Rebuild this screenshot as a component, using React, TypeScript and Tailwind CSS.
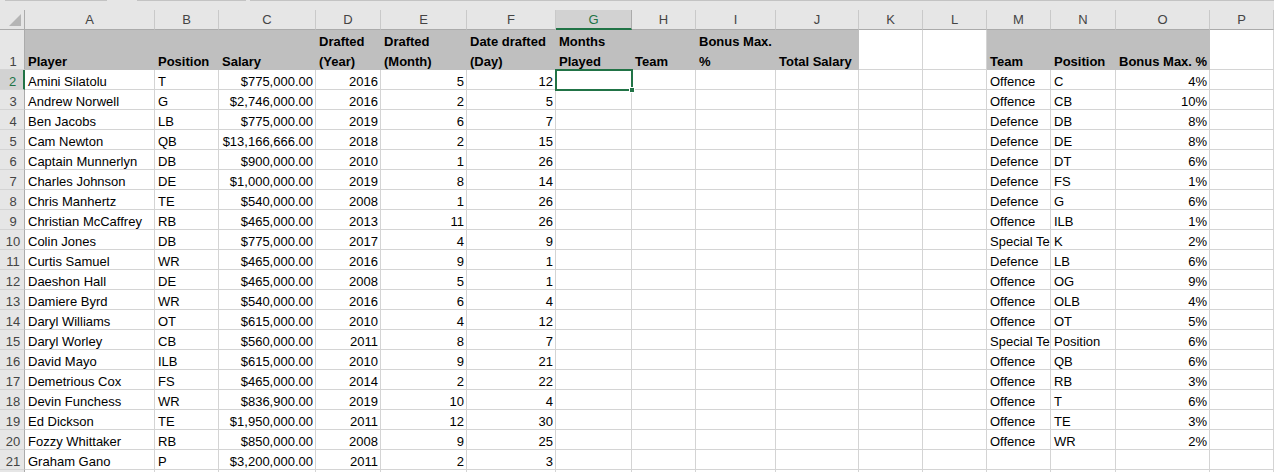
import React from 'react';

type Row = [string, string, string, string, string, string];
type Side = [string, string, string];

const players: Row[] = [
  ['Amini Silatolu', 'T', '$775,000.00', '2016', '5', '12'],
  ['Andrew Norwell', 'G', '$2,746,000.00', '2016', '2', '5'],
  ['Ben Jacobs', 'LB', '$775,000.00', '2019', '6', '7'],
  ['Cam Newton', 'QB', '$13,166,666.00', '2018', '2', '15'],
  ['Captain Munnerlyn', 'DB', '$900,000.00', '2010', '1', '26'],
  ['Charles Johnson', 'DE', '$1,000,000.00', '2019', '8', '14'],
  ['Chris Manhertz', 'TE', '$540,000.00', '2008', '1', '26'],
  ['Christian McCaffrey', 'RB', '$465,000.00', '2013', '11', '26'],
  ['Colin Jones', 'DB', '$775,000.00', '2017', '4', '9'],
  ['Curtis Samuel', 'WR', '$465,000.00', '2016', '9', '1'],
  ['Daeshon Hall', 'DE', '$465,000.00', '2008', '5', '1'],
  ['Damiere Byrd', 'WR', '$540,000.00', '2016', '6', '4'],
  ['Daryl Williams', 'OT', '$615,000.00', '2010', '4', '12'],
  ['Daryl Worley', 'CB', '$560,000.00', '2011', '8', '7'],
  ['David Mayo', 'ILB', '$615,000.00', '2010', '9', '21'],
  ['Demetrious Cox', 'FS', '$465,000.00', '2014', '2', '22'],
  ['Devin Funchess', 'WR', '$836,900.00', '2019', '10', '4'],
  ['Ed Dickson', 'TE', '$1,950,000.00', '2011', '12', '30'],
  ['Fozzy Whittaker', 'RB', '$850,000.00', '2008', '9', '25'],
  ['Graham Gano', 'P', '$3,200,000.00', '2011', '2', '3'],
];

// "Special Te" is what the sheet shows: the text is cut by the next cell
const bonus: Side[] = [
  ['Offence', 'C', '4%'],
  ['Offence', 'CB', '10%'],
  ['Defence', 'DB', '8%'],
  ['Defence', 'DE', '8%'],
  ['Defence', 'DT', '6%'],
  ['Defence', 'FS', '1%'],
  ['Defence', 'G', '6%'],
  ['Offence', 'ILB', '1%'],
  ['Special Te', 'K', '2%'],
  ['Defence', 'LB', '6%'],
  ['Offence', 'OG', '9%'],
  ['Offence', 'OLB', '4%'],
  ['Offence', 'OT', '5%'],
  ['Special Te', 'Position', '6%'],
  ['Offence', 'QB', '6%'],
  ['Offence', 'RB', '3%'],
  ['Offence', 'T', '6%'],
  ['Offence', 'TE', '3%'],
  ['Offence', 'WR', '2%'],
];

const letters = ['A', 'B', 'C', 'D', 'E', 'F', 'G', 'H', 'I', 'J', 'K', 'L', 'M', 'N', 'O', 'P'];

// header row 1 (gray fill on A:J and M:O)
const titles: (string[] | null)[] = [
  ['Player'],
  ['Position'],
  ['Salary'],
  ['Drafted', '(Year)'],
  ['Drafted', '(Month)'],
  ['Date drafted', '(Day)'],
  ['Months', 'Played'],
  ['Team'],
  ['Bonus Max.', '%'],
  ['Total Salary'],
  null,
  null,
  ['Team'],
  ['Position'],
  ['Bonus Max. %'],
  null,
];

const Cell: React.FC<{ right?: boolean; children?: React.ReactNode }> = ({ right, children }) => (
  <div
    className={`h-[20px] flex items-end overflow-hidden whitespace-nowrap border-r border-b border-[#d4d4d4] ${
      right ? 'justify-end pr-[2px]' : 'pl-[3px]'
    }`}
  >
    <span className="leading-[14px]">{children}</span>
  </div>
);

const RowHead: React.FC<{ n?: number; active?: boolean }> = ({ n, active }) => (
  <div
    className={`h-[20px] flex items-end justify-center pl-[2px] border-b border-[#d4d4d4] ${
      active ? 'bg-[#d2d2d2] text-[#217346] border-r-2 border-r-[#217346]' : 'bg-[#e6e6e6] text-[#444] border-r border-r-[#ababab]'
    }`}
  >
    <span className="leading-[14px]">{n}</span>
  </div>
);

export default function App() {
  return (
    <div className="w-[1274px] h-[472px] overflow-hidden bg-white text-[13px] text-black font-['Liberation_Sans',Arial,sans-serif]">
      {/* Ribbon edge */}
      <div className="h-[10px] bg-[#e6e6e6] flex">
        <div className="ml-[5px] w-[102px] h-[1px] bg-[#c3c3c3]" />
        <div className="ml-[30px] w-[109px] h-[1px] bg-[#c3c3c3]" />
        <div className="ml-[4px] flex-1 h-[1px] bg-[#c3c3c3]" />
      </div>

      <div className="grid grid-cols-[25px_130px_64px_97px_65px_86px_89px_76px_64px_80px_83px_64px_64px_64px_65px_94px_64px]">
        {/* Column headers */}
        <div className="h-[20px] bg-[#e6e6e6] border-r border-b border-[#ababab] flex items-end justify-end pr-[3px] pb-[3px]">
          <svg width="12" height="12" viewBox="0 0 12 12">
            <polygon points="12,0 12,12 0,12" fill="#b5b5b5" />
          </svg>
        </div>
        {letters.map(l =>
          l === 'G' ? (
            <div
              key={l}
              className="h-[20px] bg-[#d2d2d2] text-[#217346] border-r border-r-[#ababab] border-b-2 border-b-[#217346] text-center leading-[19px]"
            >
              {l}
            </div>
          ) : (
            <div
              key={l}
              className="h-[20px] bg-[#e6e6e6] text-[#444] border-r border-r-[#c9c9c9] border-b border-b-[#ababab] text-center leading-[19px]"
            >
              {l}
            </div>
          )
        )}

        {/* Row 1 */}
        <div className="h-[40px] bg-[#e6e6e6] text-[#444] border-r border-r-[#ababab] border-b border-b-[#d4d4d4] flex items-end justify-center pl-[2px]">
          <span className="leading-[14px]">1</span>
        </div>
        {titles.map((t, i) =>
          t ? (
            <div
              key={i}
              className="h-[40px] bg-[#bfbfbf] border-r border-b border-[#bfbfbf] flex items-end pl-[3px] font-bold whitespace-nowrap"
            >
              <div className="leading-[20px] -mb-[3px]">
                {t.map(line => (
                  <div key={line}>{line}</div>
                ))}
              </div>
            </div>
          ) : (
            <div key={i} className="h-[40px] border-r border-b border-[#d4d4d4]" />
          )
        )}

        {/* Data rows, row 22 only peeks in at the bottom */}
        {Array.from({ length: 21 }, (_, i) => {
          const p = players[i];
          const b = bonus[i];
          const n = i + 2;
          return (
            <React.Fragment key={n}>
              <RowHead n={n < 22 ? n : undefined} active={n === 2} />
              <Cell>{p?.[0]}</Cell>
              <Cell>{p?.[1]}</Cell>
              <Cell right>{p?.[2]}</Cell>
              <Cell right>{p?.[3]}</Cell>
              <Cell right>{p?.[4]}</Cell>
              <Cell right>{p?.[5]}</Cell>
              {n === 2 ? (
                <div className="relative h-[20px] border-r border-b border-[#d4d4d4]">
                  <div className="absolute -left-[1px] -top-[1px] w-[78px] h-[22px] border-2 border-[#217346]" />
                  <div className="absolute -right-[4px] -bottom-[4px] w-[6px] h-[6px] bg-[#217346] border border-white" />
                </div>
              ) : (
                <Cell />
              )}
              <Cell />
              <Cell />
              <Cell />
              <Cell />
              <Cell />
              <Cell>{b?.[0]}</Cell>
              <Cell>{b?.[1]}</Cell>
              <Cell right>{b?.[2]}</Cell>
              <Cell />
            </React.Fragment>
          );
        })}
      </div>
    </div>
  );
}
